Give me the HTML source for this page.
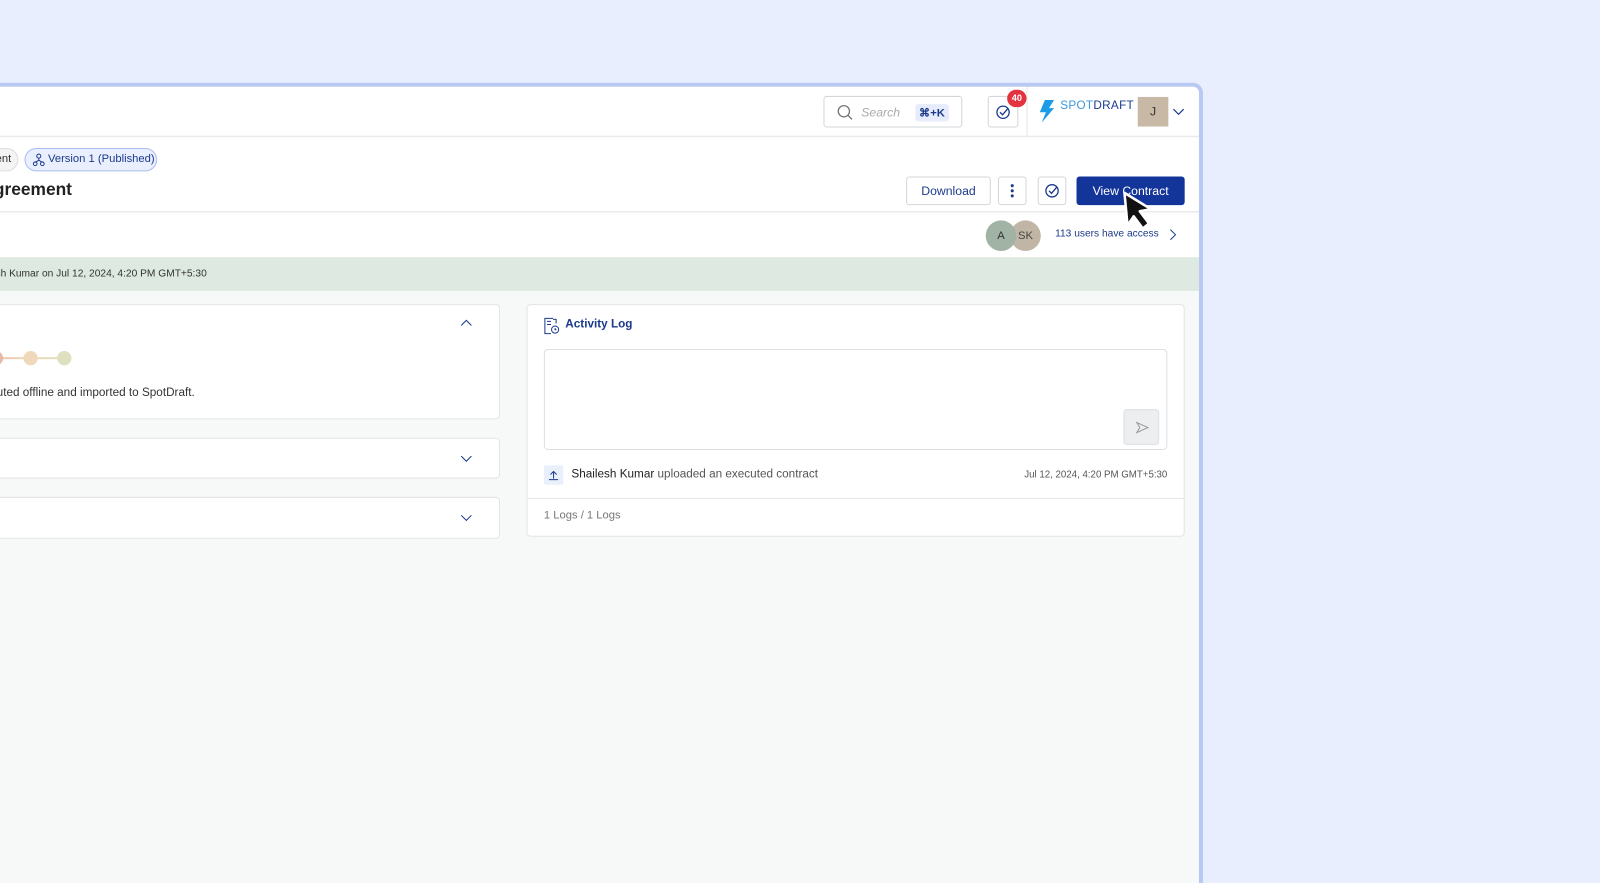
<!DOCTYPE html>
<html style="overflow:hidden"><head><style>
*{box-sizing:border-box;margin:0;padding:0}
html,body{width:1600px;height:883px;overflow:hidden}
body{background:#e8eefd;font-family:"Liberation Sans",sans-serif;position:relative;color:#222}
.wrap{position:absolute;left:0;top:0;width:1568px;height:866px;transform:scale(1.0204);transform-origin:0 0;overflow:hidden}
.win{position:absolute;left:-10px;top:81px;width:1189px;height:800px;border:4px solid #b9caf2;border-left:none;border-bottom:none;border-radius:0 10px 0 0;background:#f7f8f8;overflow:hidden}
.hdr{position:absolute;left:0;top:0;width:100%;height:49px;background:#fff;border-bottom:1px solid #e3e5e8}
.a{position:absolute}
.sec{position:absolute;left:0;width:100%;background:#fff}
.card{position:absolute;background:#fff;border:1px solid #e2e4e7;border-radius:4px}
.btn{position:absolute;border:1px solid #d3d6da;border-radius:3px;background:#fff;display:flex;align-items:center;justify-content:center;font-size:12px;color:#1b3a8c}
</style></head><body><div class="wrap">
<div class="win">
 <div class="hdr">
  <div class="btn" style="left:817px;top:9px;width:136px;height:31px;justify-content:flex-start;padding-left:12px;color:#aaa;font-style:italic;font-size:12px">
   <svg width="16" height="16" viewBox="0 0 16 16" style="margin-right:8px"><circle cx="7" cy="7" r="5.5" fill="none" stroke="#777" stroke-width="1.3"/><path d="M11 11l4 4" stroke="#777" stroke-width="1.3"/></svg>Search
   <span style="position:absolute;right:12px;top:7px;background:#e6ecfb;color:#1b3a8c;font-style:normal;font-weight:bold;font-size:11px;padding:2px 4px;border-radius:3px">⌘+K</span></div>
  <div class="btn" style="left:978px;top:9px;width:30px;height:31px"><svg width="16" height="16" viewBox="0 0 16 16"><circle cx="8" cy="8" r="6" fill="none" stroke="#1b3a8c" stroke-width="1.3"/><path d="M5 8l2.5 2.5L13 4" fill="none" stroke="#1b3a8c" stroke-width="1.3"/></svg></div>
  <div class="a" style="left:997px;top:3px;width:19px;height:17px;border-radius:9px;background:#e5323f;color:#fff;font-size:9px;font-weight:bold;text-align:center;line-height:17px">40</div>
  <div class="a" style="left:1016px;top:0;width:1px;height:49px;background:#e3e5e8"></div>
  <svg class="a" style="left:1028px;top:13px" width="16" height="22" viewBox="0 0 16 22"><path d="M6 0h9L10 8h5L3 22l4-10H1z" fill="#1c9be6"/></svg>
  <div class="a" style="left:1049px;top:13px;font-size:11.5px;letter-spacing:.3px;color:#3a98e0">SPOT<span style="color:#1b3a8c">DRAFT</span></div>
  <div class="a" style="left:1125px;top:10px;width:30px;height:29px;background:#c7b9a6;color:#333;font-size:12px;text-align:center;line-height:29px">J</div>
  <svg class="a" style="left:1158px;top:19px" width="14" height="10" viewBox="0 0 14 10"><path d="M2 3l5 5 5-5" fill="none" stroke="#1b3a8c" stroke-width="1.2"/></svg>
 </div>
 <div class="sec" style="top:50px;height:73px;border-bottom:1px solid #e3e5e8">
  <div class="a" style="left:-20px;top:10px;width:48px;height:23px;border:1px solid #ddd;border-radius:12px;background:#f4f4f4;font-size:11px;line-height:21px;text-align:right;padding-right:6px;color:#333">ent</div>
  <div class="a" style="left:34px;top:10px;width:130px;height:23px;border:1.5px solid #a9bdf0;border-radius:12px;background:#e9effd;font-size:11px;line-height:20px;color:#1b3a8c;padding-left:22px">
   <svg class="a" style="left:7px;top:4px" width="12" height="13" viewBox="0 0 12 13"><circle cx="6" cy="3" r="2" fill="none" stroke="#1b3a8c"/><circle cx="2.5" cy="10.5" r="1.8" fill="none" stroke="#1b3a8c"/><circle cx="9.5" cy="10.5" r="1.8" fill="none" stroke="#1b3a8c"/><path d="M6 5v2.5M3 8.8L6 7l3 1.8" fill="none" stroke="#1b3a8c"/></svg>Version 1 (Published)</div>
  <div class="a" style="left:4px;top:41px;font-size:17px;font-weight:bold;color:#222">greement</div>
  <div class="btn" style="left:898px;top:38px;width:83px;height:28px">Download</div>
  <div class="btn" style="left:988px;top:38px;width:28px;height:28px"><svg width="4" height="14"><circle cx="2" cy="2" r="1.5" fill="#1b3a8c"/><circle cx="2" cy="7" r="1.5" fill="#1b3a8c"/><circle cx="2" cy="12" r="1.5" fill="#1b3a8c"/></svg></div>
  <div class="btn" style="left:1027px;top:38px;width:28px;height:28px"><svg width="16" height="16" viewBox="0 0 16 16"><circle cx="8" cy="8" r="6" fill="none" stroke="#1b3a8c" stroke-width="1.3"/><path d="M5 8l2.5 2.5L13 4" fill="none" stroke="#1b3a8c" stroke-width="1.3"/></svg></div>
  <div class="btn" style="left:1065px;top:38px;width:106px;height:28px;background:#13359a;border-color:#13359a;color:#fff;font-size:12px">View Contract</div>
 </div>
 <div class="sec" style="top:124px;height:43px">
  <div class="a" style="left:1000px;top:7px;width:30px;height:30px;border-radius:50%;background:#c1b6a6;font-size:11px;text-align:center;line-height:30px;color:#444">SK</div>
  <div class="a" style="left:976px;top:7px;width:30px;height:30px;border-radius:50%;background:#a1b3a4;font-size:11px;text-align:center;line-height:30px;color:#333">A</div>
  <div class="a" style="left:1044px;top:15px;font-size:10px;color:#1b3a8c">113 users have access</div>
  <svg class="a" style="left:1155px;top:15px" width="8" height="12"><path d="M2 1l5 5-5 5" fill="none" stroke="#1b3a8c"/></svg>
 </div>
 <div class="sec" style="top:167px;height:33px;background:#dde9e1;font-size:10px;color:#333;line-height:33px;padding-left:0">&nbsp;&nbsp;sh Kumar on Jul 12, 2024, 4:20 PM GMT+5:30</div>
 <div class="card" style="left:-10px;top:213px;width:510px;height:113px">
  <svg class="a" style="left:469px;top:12px" width="14" height="10"><path d="M2 8l5-5 5 5" fill="none" stroke="#1b3a8c"/></svg>
  <div class="a" style="left:0;top:51px;width:80px;height:2px;background:linear-gradient(90deg,#e8b5a8,#efd7b6,#dfe0be)"></div>
  <div class="a" style="left:8px;top:45px;width:14px;height:14px;border-radius:50%;background:#e6b8a6"></div>
  <div class="a" style="left:42px;top:45px;width:14px;height:14px;border-radius:50%;background:#f0d8bb"></div>
  <div class="a" style="left:75px;top:45px;width:14px;height:14px;border-radius:50%;background:#dfe0bf"></div>
  <div class="a" style="left:10px;top:80px;font-size:11.5px;color:#333">cuted offline and imported to SpotDraft.</div>
 </div>
 <div class="card" style="left:-10px;top:344px;width:510px;height:40px"><svg class="a" style="left:469px;top:15px" width="14" height="10"><path d="M2 2l5 5 5-5" fill="none" stroke="#1b3a8c"/></svg></div>
 <div class="card" style="left:-10px;top:402px;width:510px;height:41px"><svg class="a" style="left:469px;top:15px" width="14" height="10"><path d="M2 2l5 5 5-5" fill="none" stroke="#1b3a8c"/></svg></div>
 <div class="card" style="left:526px;top:213px;width:645px;height:228px">
  <svg class="a" style="left:16px;top:12px" width="16" height="17" viewBox="0 0 16 17"><path d="M9 1H1v15h6" fill="none" stroke="#1b3a8c"/><path d="M3 4h4M3 7h4M9 2h3v4" fill="none" stroke="#1b3a8c"/><circle cx="11" cy="12" r="3.5" fill="none" stroke="#1b3a8c"/><path d="M11 10.5v1.7h1.3" fill="none" stroke="#1b3a8c"/></svg>
  <div class="a" style="left:37px;top:13px;font-size:11.5px;font-weight:bold;color:#1b3a8c">Activity Log</div>
  <div class="a" style="left:16px;top:43px;width:611px;height:99px;border:1px solid #dcdfe3;border-radius:4px">
   <div class="a" style="right:7px;bottom:4px;width:35px;height:35px;background:#eceeef;border:1px solid #dcdfe3;border-radius:3px"><svg style="margin:11px" width="13" height="12"><path d="M1 1l11 5-11 5 3-5z" fill="none" stroke="#999"/></svg></div>
  </div>
  <div class="a" style="left:16px;top:157px;width:19px;height:19px;background:#e9effb;border-radius:2px"><svg width="19" height="19"><path d="M9.5 13V6M6.5 9l3-3 3 3M5 14h9" fill="none" stroke="#1b3a8c"/></svg></div>
  <div class="a" style="left:43px;top:160px;font-size:11.5px;color:#555"><span style="color:#222">Shailesh Kumar</span> uploaded an executed contract</div>
  <div class="a" style="right:16px;top:161px;font-size:9.5px;color:#555">Jul 12, 2024, 4:20 PM GMT+5:30</div>
  <div class="a" style="left:0;top:189px;width:100%;height:1px;background:#e3e5e8"></div>
  <div class="a" style="left:16px;top:200px;font-size:11px;color:#777">1 Logs / 1 Logs</div>
 </div>
</div>
<svg style="position:absolute;left:1097px;top:186px" width="44" height="44" viewBox="0 0 44 44"><path d="M5 3l26 16-11 2 9 12-6 5-9-12-6 9z" fill="#111" stroke="#fff" stroke-width="2.5" stroke-linejoin="round"/></svg>
</div></body></html>
